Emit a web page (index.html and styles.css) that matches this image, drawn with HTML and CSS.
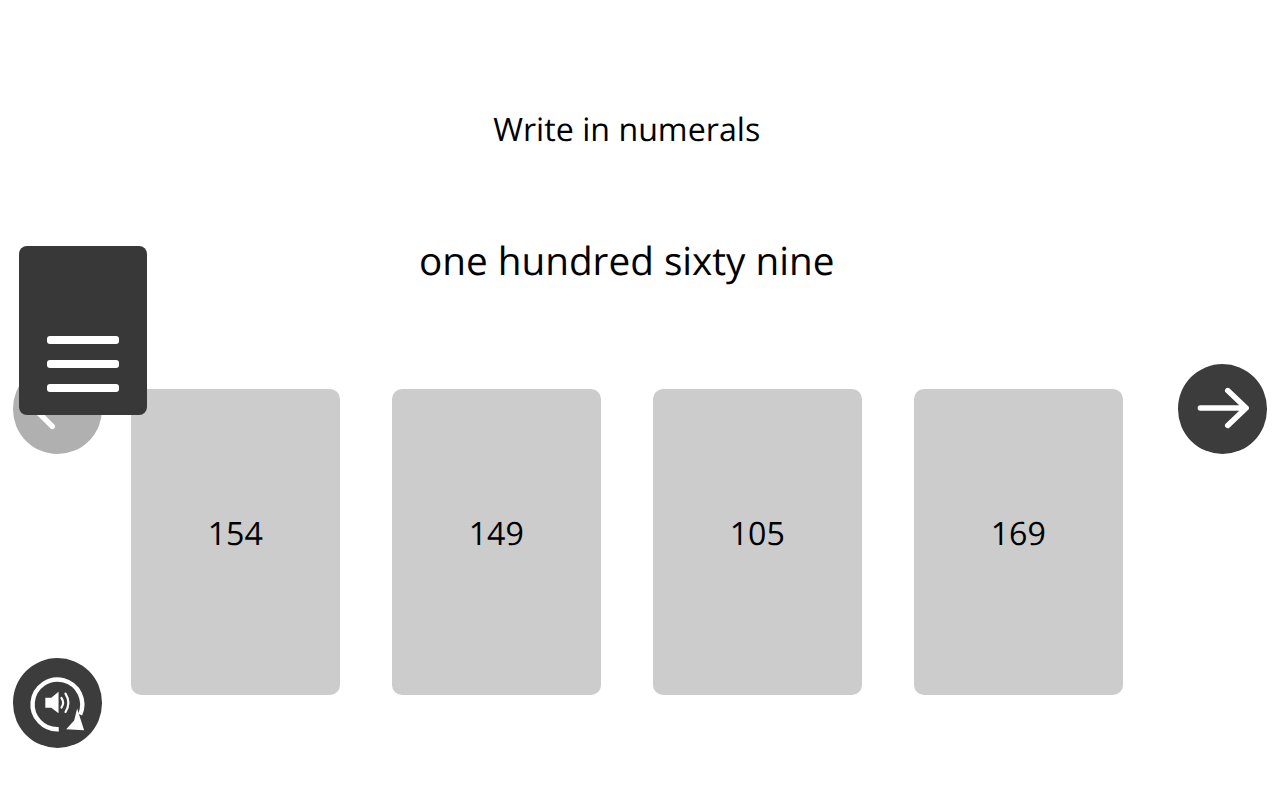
FILE: index.html
```html
<!DOCTYPE html>
<html lang="en">

<head>
    <meta charset="UTF-8">
    <meta name="viewport" content="width=device-width, initial-scale=1.0">
    <title>Write in numerals</title>
    <link rel="stylesheet" href="styles.css">
</head>

<body>
    <div id="activity">
        <h1 class="instruction">Write in numerals</h1>
        <p class="question">one hundred sixty nine</p>

        <div class="answers">
            <div class="answer">154</div>
            <div class="answer">149</div>
            <div class="answer">105</div>
            <div class="answer">169</div>
        </div>
    </div>

    <button type="button" class="round-btn prev-btn" aria-label="Previous">
        <svg width="89.500" height="90" viewBox="0 0 90 90">
            <path d="M71 44H21M39.500 26L21 44L39.500 62.500" fill="none" stroke="#fff" stroke-width="5.500" stroke-linecap="round" stroke-linejoin="round"/>
        </svg>
    </button>

    <button type="button" class="round-btn next-btn" aria-label="Next">
        <svg width="89.500" height="90" viewBox="0 0 90 90">
            <path d="M22.500 44H68.500M50 26.500L68.500 44L50 61.500" fill="none" stroke="#fff" stroke-width="5.500" stroke-linecap="round" stroke-linejoin="round"/>
        </svg>
    </button>

    <button type="button" class="round-btn audio-btn" aria-label="Replay audio">
        <svg width="89.500" height="90" viewBox="0 0 90 90">
            <path d="M46 71.400A25 25 0 1 1 67.500 56.600" fill="none" stroke="#fff" stroke-width="4.400"/>
            <path d="M64.500 50.500L71.500 72.500L53.500 71.500L61.500 62.500Z" fill="#fff"/>
            <path d="M32.500 39.700H38.500L45.800 33.700V55.300L38.500 49.700H32.500Z" fill="#fff"/>
            <path d="M48.800 40Q52 44.700 48.800 49.500M52.800 35.500Q58.500 44.700 52.800 54" fill="none" stroke="#fff" stroke-width="2.200" stroke-linecap="round"/>
        </svg>
    </button>

    <button type="button" class="menu-btn" aria-label="Menu">
        <span class="menu-bar"></span>
        <span class="menu-bar"></span>
        <span class="menu-bar"></span>
    </button>
</body>

</html>
```

FILE: styles.css
```css
html, body {
    margin: 0;
    height: 100%;
    background-color: #ffffff;
    overflow: hidden;
}

body {
    font-family: "Open Sans", sans-serif;
    color: #000000;
    text-rendering: geometricPrecision;
}

#activity {
    width: 1253.500px;
    padding-top: 108px;
    text-align: center;
}

.instruction {
    margin: 0;
    font-size: 32.200px;
    font-weight: 400;
    line-height: 44px;
}

.question {
    margin: 83px 0 0;
    font-size: 38.700px;
    line-height: 52px;
}

.answers {
    display: flex;
    justify-content: center;
    gap: 51.500px;
    margin-top: 102px;
}

.answer {
    width: 209.500px;
    height: 306px;
    padding-top: 123px;
    box-sizing: border-box;
    border-radius: 10px;
    background-color: #cccccc;
    font-size: 32.200px;
    line-height: 44px;
}

.round-btn {
    position: absolute;
    width: 89.500px;
    height: 90px;
    padding: 0;
    border: 0;
    border-radius: 50%;
    background-color: #3c3c3c;
}

.round-btn svg {
    display: block;
}

.prev-btn {
    left: 12.500px;
    top: 364px;
    opacity: 0.4;
}

.next-btn {
    left: 1177.500px;
    top: 364px;
}

.audio-btn {
    left: 12.500px;
    top: 658px;
}

/* sits on top of the previous button */
.menu-btn {
    position: absolute;
    left: 18.500px;
    top: 246px;
    width: 128.500px;
    height: 169px;
    padding: 0 0 23px;
    box-sizing: border-box;
    border: 0;
    border-radius: 8px;
    background-color: #383838;
    display: flex;
    flex-direction: column;
    justify-content: flex-end;
    align-items: center;
    gap: 16px;
}

.menu-bar {
    width: 72.500px;
    height: 8px;
    border-radius: 3px;
    background-color: #ffffff;
}
```
